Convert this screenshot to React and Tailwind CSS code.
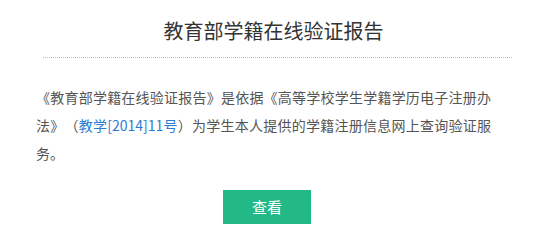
export default function App() {
  return (
    <div
      className="w-[547px] h-[252px] bg-white overflow-hidden [text-spacing-trim:space-all]"
      style={{ fontFamily: '"Microsoft YaHei", "Noto Sans CJK SC", sans-serif' }}
    >
      <h1 className="pt-[16px] text-center text-[20px] leading-[30px] font-normal text-[#333]">
        教育部学籍在线验证报告
      </h1>
      <div className="ml-[43px] mt-[11px] w-[469px] border-b border-dotted border-[#a9c8c4]" />
      <p className="ml-[36px] mt-[25px] w-[455px] text-justify text-[14px] leading-[28px] text-[#555] [text-spacing-trim:space-all]">
        《教育部学籍在线验证报告》是依据《高等学校学生学籍学历电子注册办法》（
        <a href="#" className="text-[#2b7cd3]">教学[2014]11号</a>
        ）为学生本人提供的学籍注册信息网上查询验证服务。
      </p>
      <div className="ml-[223px] mt-[23px]">
        <button className="w-[88px] h-[34px] bg-[#22b987] text-white text-[15px] leading-[34px]">
          查看
        </button>
      </div>
    </div>
  );
}
